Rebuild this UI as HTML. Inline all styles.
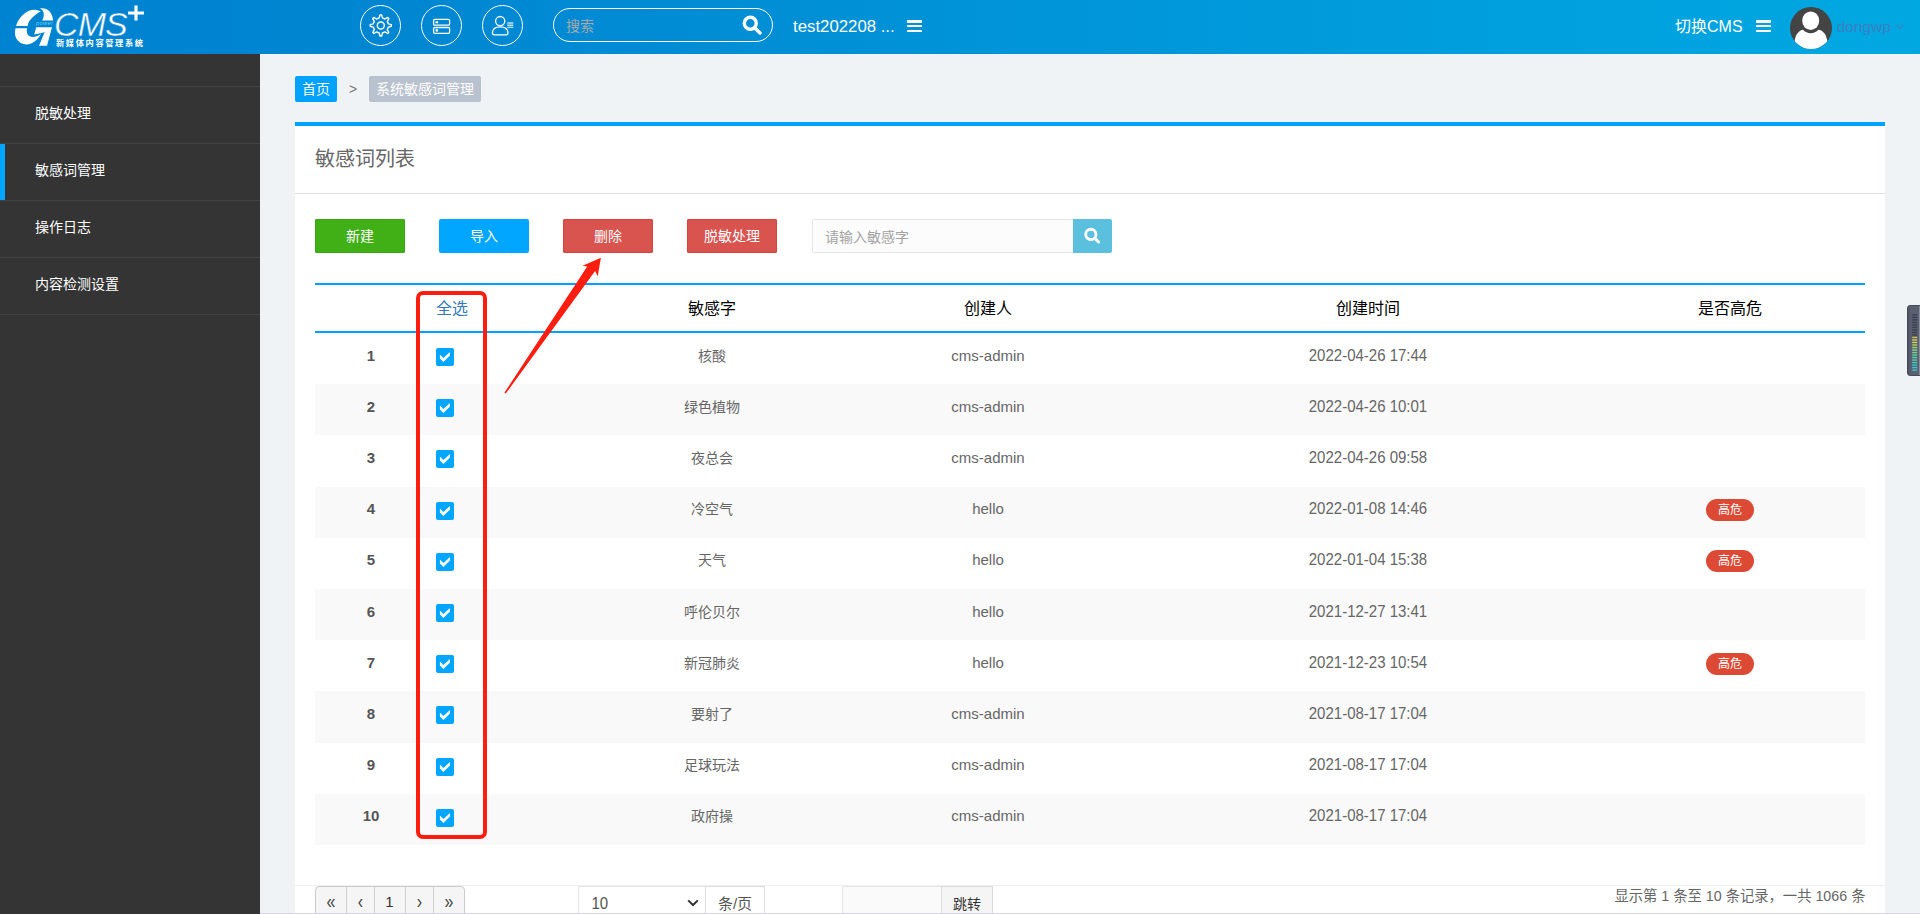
<!DOCTYPE html>
<html lang="zh-CN">
<head>
<meta charset="utf-8">
<title>系统敏感词管理</title>
<style>
*{box-sizing:border-box;margin:0;padding:0}
html,body{width:1920px;height:914px;overflow:hidden}
body{position:relative;background:#eff3f6;font-family:"Liberation Sans","Noto Sans CJK SC",sans-serif;font-size:14px;color:#666}
.abs{position:absolute}
/* header */
#hdr{position:absolute;left:0;top:0;width:1920px;height:54px;background:linear-gradient(90deg,#0083d1 0,#0085d1 340px,#00a8e1 1920px)}
.circ{position:absolute;top:5px;width:41px;height:41px;border:1.3px solid #fff;border-radius:50%}
.circ svg{position:absolute;left:-1.3px;top:-1.3px;width:41px;height:41px}
#srch{position:absolute;left:553px;top:8px;width:220px;height:34px;border:1.3px solid #fff;border-radius:17px}
#srch span{position:absolute;left:12px;top:8.5px;font-size:14px;line-height:17px;color:#a9a9a9}
#site{position:absolute;left:793px;top:14.5px;font-size:16.8px;line-height:24px;color:#fff;white-space:nowrap}
.burger{position:absolute;width:15px;height:12px}
.burger i{position:absolute;left:0;width:15px;height:2.7px;background:#fff;border-radius:.8px}
#sw{position:absolute;left:1675px;top:14.5px;font-size:16px;line-height:24px;color:#fff;white-space:nowrap}
#uname{position:absolute;left:1836.5px;top:15.3px;font-size:15.5px;line-height:24px;color:#3a80c4;white-space:nowrap}
/* sidebar */
#side{position:absolute;left:0;top:54px;width:260px;height:860px;background:#343434}
.mi{position:absolute;left:0;width:260px;height:57px;border-top:1px solid #424242;color:#fff;font-size:14px;line-height:20px;padding:16px 0 0 35px}
.mi.act{padding-left:35px}
.mi.act:before{content:"";position:absolute;left:0;top:0;width:5px;height:56px;background:#00a6ff}
/* breadcrumb */
.bc{position:absolute;top:76px;height:26px;border-radius:2px;color:#fff;font-size:14px;line-height:26px;text-align:center;white-space:nowrap}
/* panel */
#panel{position:absolute;left:295px;top:122px;width:1590px;height:800px;background:#fff;border-top:4px solid #00a2ff}
#ttl{position:absolute;left:20px;top:19px;font-size:20px;line-height:28px;color:#666}
#tsep{position:absolute;left:0;top:67px;width:1590px;height:1px;background:#e0e0e0}
.btn{position:absolute;top:219px;width:90px;height:34px;border-radius:2px;color:#fff;font-size:14px;line-height:34px;text-align:center}
/* table */
#tbl{position:absolute;left:315px;top:283px;width:1550px}
.row{position:absolute;left:0;width:1550px;height:51.2px}
.row.odd{background:#f9f9f9}
.c{position:absolute;top:0;height:100%;text-align:center;white-space:nowrap;font-size:14px;line-height:20px;transform:translateX(-50%)}
.hd .c{font-size:16px;color:#000;line-height:22px}
.cb{position:absolute;left:121px;top:15px;width:18px;height:18px;border-radius:2px;background:#00a6ff}
.cb svg{position:absolute;left:0;top:0;width:18px;height:18px}
.tag{position:absolute;left:1391.2px;top:12.4px;width:47.7px;height:22px;border-radius:11px;background:#dc4a36;color:#fff;font-size:12px;line-height:22px;text-align:center}
.pg{transform:translateX(-50%);font-size:15px;line-height:22px;color:#333}
.pg.sy{font-size:16px;color:#444;transform:translateX(-50%) scaleY(1.3)}
#wg{position:absolute;left:1907px;top:305px;width:16px;height:71px;border-radius:3px;background:linear-gradient(90deg,#4d5261 0,#5a6071 3px,#5a6071 11px,#8a8f9c 11.5px);border:1px solid #474b59}
#wg i{position:absolute;left:4.2px;width:5px;height:1.4px}
.c.la{font-size:15px}
.c.dt{transform:translateX(-50%) scaleY(1.06);transform-origin:50% 16px}
</style>
</head>
<body>
<div id="hdr">
<svg class="abs" style="left:0;top:0" width="160" height="54" viewBox="0 0 160 54">
<g fill="#fff">
<path d="M16 25.9C17.2 22.5 18.6 20 20.1 18.1C22 15.6 24 13.6 26.6 12.1C29 10.6 31.6 9.8 34.2 9.8C36.6 9.8 38.8 10.4 40.7 11.6C38.6 12.4 36.8 13.6 35.2 15.1C33.2 16.8 31.6 18.4 30.1 20.1C28.8 21.8 28 23.6 27.6 25.9Z"/>
<path d="M39.7 8.3C42 8 44.3 8.2 46.3 9C48.6 10 50.2 11.8 51.3 14.1C52.3 16 52.9 18.2 53.1 20.6L42 20.6C42.8 19.6 43.3 18.4 43.5 17.1C43.8 15.8 43.9 14.4 43.7 13.1C43.5 11.9 43 10.9 42.2 10C41.5 9.3 40.7 8.7 39.7 8.3Z"/>
<path d="M15.5 28.2L27.1 28.2C26.8 29.6 26.7 30.9 26.9 32.2C27.2 33.6 27.7 34.8 28.6 35.6C29.6 36.5 30.8 36.9 32.2 37C33.9 37 35.6 36.6 37.2 36C38.6 35.4 39.9 34.7 41 34C40 36 38.7 37.7 37.2 39.2C35.7 40.7 34.1 42 32.2 43.1C30.6 44 28.9 44.5 27.1 44.5C25.5 44.5 24 44.3 22.6 43.8C20.5 43.1 18.8 41.9 17.6 40.3C16.2 38.6 15.3 36.5 15 34.2C14.8 32.2 15 30.2 15.5 28.2Z"/>
<path d="M36.2 27.2L52 27.2L47 45.8L39 45.8L44.7 32.1C41 33.4 37 34.2 34.2 34.5Z"/>
</g>
<text x="36" y="25.4" font-family="Liberation Sans, sans-serif" font-style="italic" font-size="5.6" fill="#6fd2f0" letter-spacing="0.45">power</text>
<text x="54" y="36.2" font-family="Liberation Sans, sans-serif" font-style="italic" font-size="34" fill="#fff" stroke="#0083d1" stroke-width="0.45" letter-spacing="-0.9">CMS</text>
<path d="M128 13H144M136 5.5V20.5" stroke="#fff" stroke-width="3.2" fill="none"/>
<text x="56" y="46" font-family="Liberation Sans, Noto Sans CJK SC, sans-serif" font-weight="bold" font-size="8.2" fill="#fff" textLength="87" lengthAdjust="spacing">新媒体内容管理系统</text>
</svg>
<div class="circ" style="left:360px"><svg viewBox="0 0 41 41"><g fill="none" stroke="#fff" stroke-width="1.4" stroke-linejoin="round"><path d="M19.18 12.92 L19.97 9.88 L21.63 9.88 L22.42 12.92 L24.98 13.98 L27.68 12.39 L28.86 13.57 L27.27 16.27 L28.33 18.83 L31.37 19.62 L31.37 21.28 L28.33 22.07 L27.27 24.63 L28.86 27.33 L27.68 28.51 L24.98 26.92 L22.42 27.98 L21.63 31.02 L19.97 31.02 L19.18 27.98 L16.62 26.92 L13.92 28.51 L12.74 27.33 L14.33 24.63 L13.27 22.07 L10.23 21.28 L10.23 19.62 L13.27 18.83 L14.33 16.27 L12.74 13.57 L13.92 12.39 L16.62 13.98Z"/><circle cx="20.8" cy="20.45" r="3.5"/></g></svg></div>
<div class="circ" style="left:421px"><svg viewBox="0 0 41 41"><g><rect x="12.6" y="14.4" width="16" height="5.8" rx="1.2" fill="none" stroke="#fff" stroke-width="1.3"/><rect x="12.6" y="22.5" width="16" height="5.8" rx="1.2" fill="none" stroke="#fff" stroke-width="1.3"/><circle cx="15.8" cy="17.3" r="1.3" fill="#fff"/><circle cx="15.8" cy="25.4" r="1.3" fill="#fff"/></g></svg></div>
<div class="circ" style="left:482px"><svg viewBox="0 0 41 41"><g><circle cx="18.2" cy="16.1" r="4.6" fill="none" stroke="#fff" stroke-width="1.3"/><path d="M10.4 28C10.4 24 13.5 21.8 18.2 21.8C23 21.8 26 24 26 28C26 29.2 25.4 29.8 24.4 29.8L12 29.8C11 29.8 10.4 29.2 10.4 28Z" fill="none" stroke="#fff" stroke-width="1.3" stroke-linejoin="round"/><path d="M25.3 18h6M25.3 20.2h6M25.3 22.4h6" stroke="#fff" stroke-opacity=".75" stroke-width="1.4"/></g></svg></div>
<div id="srch"><span>搜索</span>
<svg class="abs" style="left:187px;top:5.5px" width="22" height="20" viewBox="0 0 22 20"><circle cx="9.3" cy="8.3" r="6" fill="none" stroke="#fff" stroke-width="3.4"/><path d="M13.6 12.8L19 18" stroke="#fff" stroke-width="3.4" stroke-linecap="round"/></svg></div>
<div id="site">test202208 ...</div>
<div class="burger" style="left:907px;top:20px"><i style="top:0"></i><i style="top:4.8px"></i><i style="top:9.6px"></i></div>
<div id="sw">切换CMS</div>
<div class="burger" style="left:1756px;top:20px"><i style="top:0"></i><i style="top:4.8px"></i><i style="top:9.6px"></i></div>
<svg class="abs" style="left:1790px;top:7px" width="42" height="42" viewBox="0 0 42 42"><defs><clipPath id="avc"><circle cx="21" cy="21" r="21"/></clipPath></defs><circle cx="21" cy="21" r="21" fill="#444"/><g clip-path="url(#avc)" fill="#fff"><ellipse cx="20.7" cy="13.7" rx="8.5" ry="9.3"/><path d="M13 22.8C9 23.4 6 27 4.6 33.5L4.6 44L37.3 44L37.3 33.5C36 27 33 23.4 28.4 22.8C26.4 25 23.8 26.2 20.7 26.2C17.6 26.2 15 25 13 22.8Z"/></g></svg>
<div id="uname">dongwp</div>
<svg class="abs" style="left:1896.2px;top:24.3px" width="8" height="6" viewBox="0 0 8 6"><path d="M0.7 1L4 4.3L7.3 1" fill="none" stroke="#3a80c4" stroke-width="1.2"/></svg>
</div>
<div id="side">
<div class="mi" style="top:32px">脱敏处理</div>
<div class="mi act" style="top:89px">敏感词管理</div>
<div class="mi" style="top:146px">操作日志</div>
<div class="mi" style="top:203px">内容检测设置</div>
<div class="mi" style="top:260px;height:1px;padding:0"></div>
</div>
<div class="bc" style="left:295px;width:42px;background:#00a2ff">首页</div>
<div class="abs" style="left:349px;top:79px;font-size:14px;line-height:20px;color:#777">&gt;</div>
<div class="bc" style="left:369px;width:112px;background:#b8c1ce">系统敏感词管理</div>
<div id="panel"><div id="ttl">敏感词列表</div><div id="tsep"></div></div>
<div class="btn" style="left:315px;background:#41b017;box-shadow:inset 0 0 0 1px #3aa514">新建</div>
<div class="btn" style="left:439px;background:#00a6ff">导入</div>
<div class="btn" style="left:563px;background:#d9534f;box-shadow:inset 0 0 0 1px #d4433e">删除</div>
<div class="btn" style="left:687px;background:#d9534f;box-shadow:inset 0 0 0 1px #d4433e">脱敏处理</div>
<div class="abs" style="left:812px;top:219px;width:262px;height:34px;border:1px solid #e6e6e6;border-radius:2px 0 0 2px;background:#fcfcfc;padding:8px 0 0 12px;font-size:14px;line-height:18px;color:#a3a3a3">请输入敏感字</div>
<div class="abs" style="left:1073px;top:219px;width:39px;height:34px;border-radius:0 2px 2px 0;background:#5bc0de"><svg class="abs" style="left:10px;top:8px" width="19" height="19" viewBox="0 0 17 17"><circle cx="7" cy="6.6" r="4.6" fill="none" stroke="#fff" stroke-width="2.5"/><path d="M10.6 10.2L13.9 13.4" stroke="#fff" stroke-width="2.7" stroke-linecap="round"/></svg></div>
<div id="tbl">
<div class="abs" style="left:0;top:0;width:1550px;height:2px;background:#00a2ff"></div>
<div class="abs" style="left:0;top:48px;width:1550px;height:2px;background:#00a2ff"></div>
<div class="row hd" style="top:2px;height:46px"><span class="c" style="left:137px;top:13px;color:#337ab7">全选</span><span class="c" style="left:397px;top:13px">敏感字</span><span class="c" style="left:673px;top:13px">创建人</span><span class="c" style="left:1053px;top:13px">创建时间</span><span class="c" style="left:1415px;top:13px">是否高危</span></div>
<div class="row" style="top:50.0px"><span class="c" style="left:56px;top:12.6px;font-weight:bold;font-size:15px;color:#555">1</span><span class="cb"><svg viewBox="0 0 18 18"><path d="M3.9 6.4L7.4 9.9L14 4L14 7.6L7.4 14.1L3.9 10.5Z" fill="#fff"/></svg></span><span class="c" style="left:397px;top:12.6px">核酸</span><span class="c la" style="left:673px;top:12.6px">cms-admin</span><span class="c la dt" style="left:1053px;top:12.6px">2022-04-26 17:44</span></div>
<div class="row odd" style="top:101.2px"><span class="c" style="left:56px;top:12.6px;font-weight:bold;font-size:15px;color:#555">2</span><span class="cb"><svg viewBox="0 0 18 18"><path d="M3.9 6.4L7.4 9.9L14 4L14 7.6L7.4 14.1L3.9 10.5Z" fill="#fff"/></svg></span><span class="c" style="left:397px;top:12.6px">绿色植物</span><span class="c la" style="left:673px;top:12.6px">cms-admin</span><span class="c la dt" style="left:1053px;top:12.6px">2022-04-26 10:01</span></div>
<div class="row" style="top:152.4px"><span class="c" style="left:56px;top:12.6px;font-weight:bold;font-size:15px;color:#555">3</span><span class="cb"><svg viewBox="0 0 18 18"><path d="M3.9 6.4L7.4 9.9L14 4L14 7.6L7.4 14.1L3.9 10.5Z" fill="#fff"/></svg></span><span class="c" style="left:397px;top:12.6px">夜总会</span><span class="c la" style="left:673px;top:12.6px">cms-admin</span><span class="c la dt" style="left:1053px;top:12.6px">2022-04-26 09:58</span></div>
<div class="row odd" style="top:203.6px"><span class="c" style="left:56px;top:12.6px;font-weight:bold;font-size:15px;color:#555">4</span><span class="cb"><svg viewBox="0 0 18 18"><path d="M3.9 6.4L7.4 9.9L14 4L14 7.6L7.4 14.1L3.9 10.5Z" fill="#fff"/></svg></span><span class="c" style="left:397px;top:12.6px">冷空气</span><span class="c la" style="left:673px;top:12.6px">hello</span><span class="c la dt" style="left:1053px;top:12.6px">2022-01-08 14:46</span><span class="tag">高危</span></div>
<div class="row" style="top:254.8px"><span class="c" style="left:56px;top:12.6px;font-weight:bold;font-size:15px;color:#555">5</span><span class="cb"><svg viewBox="0 0 18 18"><path d="M3.9 6.4L7.4 9.9L14 4L14 7.6L7.4 14.1L3.9 10.5Z" fill="#fff"/></svg></span><span class="c" style="left:397px;top:12.6px">天气</span><span class="c la" style="left:673px;top:12.6px">hello</span><span class="c la dt" style="left:1053px;top:12.6px">2022-01-04 15:38</span><span class="tag">高危</span></div>
<div class="row odd" style="top:306.0px"><span class="c" style="left:56px;top:12.6px;font-weight:bold;font-size:15px;color:#555">6</span><span class="cb"><svg viewBox="0 0 18 18"><path d="M3.9 6.4L7.4 9.9L14 4L14 7.6L7.4 14.1L3.9 10.5Z" fill="#fff"/></svg></span><span class="c" style="left:397px;top:12.6px">呼伦贝尔</span><span class="c la" style="left:673px;top:12.6px">hello</span><span class="c la dt" style="left:1053px;top:12.6px">2021-12-27 13:41</span></div>
<div class="row" style="top:357.2px"><span class="c" style="left:56px;top:12.6px;font-weight:bold;font-size:15px;color:#555">7</span><span class="cb"><svg viewBox="0 0 18 18"><path d="M3.9 6.4L7.4 9.9L14 4L14 7.6L7.4 14.1L3.9 10.5Z" fill="#fff"/></svg></span><span class="c" style="left:397px;top:12.6px">新冠肺炎</span><span class="c la" style="left:673px;top:12.6px">hello</span><span class="c la dt" style="left:1053px;top:12.6px">2021-12-23 10:54</span><span class="tag">高危</span></div>
<div class="row odd" style="top:408.4px"><span class="c" style="left:56px;top:12.6px;font-weight:bold;font-size:15px;color:#555">8</span><span class="cb"><svg viewBox="0 0 18 18"><path d="M3.9 6.4L7.4 9.9L14 4L14 7.6L7.4 14.1L3.9 10.5Z" fill="#fff"/></svg></span><span class="c" style="left:397px;top:12.6px">要射了</span><span class="c la" style="left:673px;top:12.6px">cms-admin</span><span class="c la dt" style="left:1053px;top:12.6px">2021-08-17 17:04</span></div>
<div class="row" style="top:459.6px"><span class="c" style="left:56px;top:12.6px;font-weight:bold;font-size:15px;color:#555">9</span><span class="cb"><svg viewBox="0 0 18 18"><path d="M3.9 6.4L7.4 9.9L14 4L14 7.6L7.4 14.1L3.9 10.5Z" fill="#fff"/></svg></span><span class="c" style="left:397px;top:12.6px">足球玩法</span><span class="c la" style="left:673px;top:12.6px">cms-admin</span><span class="c la dt" style="left:1053px;top:12.6px">2021-08-17 17:04</span></div>
<div class="row odd" style="top:510.8px"><span class="c" style="left:56px;top:12.6px;font-weight:bold;font-size:15px;color:#555">10</span><span class="cb"><svg viewBox="0 0 18 18"><path d="M3.9 6.4L7.4 9.9L14 4L14 7.6L7.4 14.1L3.9 10.5Z" fill="#fff"/></svg></span><span class="c" style="left:397px;top:12.6px">政府操</span><span class="c la" style="left:673px;top:12.6px">cms-admin</span><span class="c la dt" style="left:1053px;top:12.6px">2021-08-17 17:04</span></div>
</div>
<div class="abs" style="left:416.2px;top:291.2px;width:70.6px;height:548.3px;border:4.2px solid #fb1d10;border-radius:7px"></div>
<svg class="abs" style="left:495px;top:250px" width="120" height="150" viewBox="495 250 120 150"><path d="M504.5 392.6L587.2 266.4L582.6 265.7L600.9 257.8L597.7 276.2L595.1 271L505.8 393.4Z" fill="#fb1d10"/></svg>
<div class="abs" style="left:295px;top:885px;width:1590px;height:1px;background:#efefef"></div>
<div class="abs" style="left:315px;top:886px;width:150px;height:40px;border:1px solid #cbcbcb;border-radius:4px 4px 0 0;background:#f5f5f5"></div>
<div class="abs" style="left:346px;top:887px;width:1px;height:30px;background:#d0d0d0"></div>
<div class="abs" style="left:374px;top:887px;width:1px;height:30px;background:#d0d0d0"></div>
<div class="abs" style="left:405px;top:887px;width:1px;height:30px;background:#d0d0d0"></div>
<div class="abs" style="left:433px;top:887px;width:1px;height:30px;background:#d0d0d0"></div>
<div class="abs pg sy" style="left:331px;top:890px">«</div>
<div class="abs pg sy" style="left:360.5px;top:890px">‹</div>
<div class="abs pg" style="left:389.5px;top:891px">1</div>
<div class="abs pg sy" style="left:419.5px;top:890px">›</div>
<div class="abs pg sy" style="left:449px;top:890px">»</div>
<div class="abs" style="left:578px;top:886px;width:128px;height:40px;border:1px solid #e6e6e6;border-bottom:0;background:#fff;font-size:15px;line-height:20px;color:#555;padding:7px 0 0 12.5px"><span style="display:inline-block;transform:scaleY(1.1);transform-origin:50% 70%">10</span></div>
<svg class="abs" style="left:687px;top:899px" width="12" height="8" viewBox="0 0 12 8"><path d="M1.2 1.4L6 6L10.8 1.4" fill="none" stroke="#333" stroke-width="2"/></svg>
<div class="abs" style="left:705px;top:886px;width:60px;height:40px;border:1px solid #ddd;background:#fff;font-size:15px;line-height:20px;color:#555;text-align:center;padding-top:6.5px">条/页</div>
<div class="abs" style="left:842px;top:886px;width:100px;height:40px;border:1px solid #e6e6e6;background:#fafafa"></div>
<div class="abs" style="left:941px;top:886px;width:52px;height:40px;border:1px solid #ddd;background:#f5f5f5;font-size:14px;line-height:20px;color:#333;text-align:center;padding-top:6.5px">跳转</div>
<div class="abs" style="right:54.5px;top:886px;font-size:14.3px;line-height:20px;color:#666;white-space:nowrap">显示第 1 条至 10 条记录，一共 1066 条</div>
<div class="abs" style="left:260px;top:912.6px;width:1660px;height:2px;background:#d4d3df"></div>
<div id="wg"><svg class="abs" style="left:0;top:0" width="14" height="69" viewBox="0 0 14 69"><rect x="4.2" y="8.20" width="5" height="1.35" fill="#3b3f4d"/><rect x="4.2" y="10.71" width="5" height="1.35" fill="#3b3f4d"/><rect x="4.2" y="13.22" width="5" height="1.35" fill="#3b3f4d"/><rect x="4.2" y="15.73" width="5" height="1.35" fill="#3b3f4d"/><rect x="4.2" y="18.24" width="5" height="1.35" fill="#3b3f4d"/><rect x="4.2" y="20.75" width="5" height="1.35" fill="#3b3f4d"/><rect x="4.2" y="23.26" width="5" height="1.35" fill="#3b3f4d"/><rect x="4.2" y="25.77" width="5" height="1.35" fill="#3b3f4d"/><rect x="4.2" y="28.28" width="5" height="1.35" fill="#3b3f4d"/><rect x="4.2" y="30.79" width="5" height="1.35" fill="#d6bf4c"/><rect x="4.2" y="33.30" width="5" height="1.35" fill="#dcd24c"/><rect x="4.2" y="35.81" width="5" height="1.35" fill="#cbd455"/><rect x="4.2" y="38.32" width="5" height="1.35" fill="#b4d45e"/><rect x="4.2" y="40.83" width="5" height="1.35" fill="#9cd56c"/><rect x="4.2" y="43.34" width="5" height="1.35" fill="#88d97e"/><rect x="4.2" y="45.85" width="5" height="1.35" fill="#74d98e"/><rect x="4.2" y="48.36" width="5" height="1.35" fill="#62d99e"/><rect x="4.2" y="50.87" width="5" height="1.35" fill="#54d8ac"/><rect x="4.2" y="53.38" width="5" height="1.35" fill="#4ad4b6"/><rect x="4.2" y="55.89" width="5" height="1.35" fill="#42d2be"/><rect x="4.2" y="58.40" width="5" height="1.35" fill="#3fcdc4"/><rect x="4.2" y="60.91" width="5" height="1.35" fill="#3bcaca"/><rect x="4.2" y="63.42" width="5" height="1.35" fill="#38c4cf"/></svg></div>
</body>
</html>
